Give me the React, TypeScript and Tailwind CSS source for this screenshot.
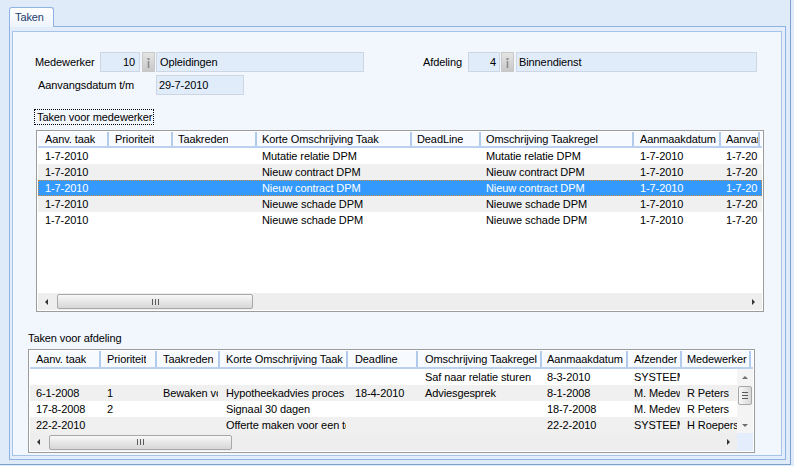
import React from 'react';

type Col = { w: string; pl: string; t: string };

const takenCols: Col[] = [
  { w: 'w-[71px]', pl: 'pl-[7px]', t: 'Aanv. taak' },
  { w: 'w-[64px]', pl: 'pl-[6px]', t: 'Prioriteit' },
  { w: 'w-[84px]', pl: 'pl-[5px]', t: 'Taakreden' },
  { w: 'w-[155px]', pl: 'pl-[5px]', t: 'Korte Omschrijving Taak' },
  { w: 'w-[69px]', pl: 'pl-[5px]', t: 'DeadLine' },
  { w: 'w-[153px]', pl: 'pl-[5px]', t: 'Omschrijving Taakregel' },
  { w: 'w-[87px]', pl: 'pl-[6px]', t: 'Aanmaakdatum' },
  { w: 'w-[39px]', pl: 'pl-[5px]', t: 'Aanvangsdatum' },
];

const takenRows: string[][] = [
  ['1-7-2010', '', '', 'Mutatie relatie DPM', '', 'Mutatie relatie DPM', '1-7-2010', '1-7-2010'],
  ['1-7-2010', '', '', 'Nieuw contract DPM', '', 'Nieuw contract DPM', '1-7-2010', '1-7-2010'],
  ['1-7-2010', '', '', 'Nieuw contract DPM', '', 'Nieuw contract DPM', '1-7-2010', '1-7-2010'],
  ['1-7-2010', '', '', 'Nieuwe schade DPM', '', 'Nieuwe schade DPM', '1-7-2010', '1-7-2010'],
  ['1-7-2010', '', '', 'Nieuwe schade DPM', '', 'Nieuwe schade DPM', '1-7-2010', '1-7-2010'],
];

const afdCols: Col[] = [
  { w: 'w-[71px]', pl: 'pl-[6px]', t: 'Aanv. taak' },
  { w: 'w-[56px]', pl: 'pl-[6px]', t: 'Prioriteit' },
  { w: 'w-[63px]', pl: 'pl-[6px]', t: 'Taakreden' },
  { w: 'w-[128px]', pl: 'pl-[6px]', t: 'Korte Omschrijving Taak' },
  { w: 'w-[70px]', pl: 'pl-[7px]', t: 'Deadline' },
  { w: 'w-[124px]', pl: 'pl-[7px]', t: 'Omschrijving Taakregel' },
  { w: 'w-[86px]', pl: 'pl-[5px]', t: 'Aanmaakdatum' },
  { w: 'w-[54px]', pl: 'pl-[6px]', t: 'Afzender' },
  { w: 'w-[69px]', pl: 'pl-[5px]', t: 'Medewerker' },
];

const afdRows: string[][] = [
  ['', '', '', '', '', 'Saf naar relatie sturen', '8-3-2010', 'SYSTEEM', ''],
  ['6-1-2008', '1', 'Bewaken voorstel', 'Hypotheekadvies proces', '18-4-2010', 'Adviesgesprek', '8-1-2008', 'M. Medewerker', 'R Peters'],
  ['17-8-2008', '2', '', 'Signaal 30 dagen', '', '', '18-7-2008', 'M. Medewerker', 'R Peters'],
  ['22-2-2010', '', '', 'Offerte maken voor een toekomstige klant', '', '', '22-2-2010', 'SYSTEEM', 'H Roepers'],
];

function InfoButton() {
  return (
    <div className="ml-[2px] flex h-[20px] w-[13px] items-center justify-center border border-[#c9c9c9] bg-linear-to-b from-[#e4e4e4] to-[#c8c8c8]">
      <svg width="11" height="18" viewBox="0 0 11 18">
        <rect x="4.5" y="5" width="2" height="2" fill="#8a8a8a" />
        <rect x="4.5" y="8" width="2" height="7" fill="#a5a5a5" />
        <rect x="5" y="8" width="1" height="7" fill="#8e8e8e" />
      </svg>
    </div>
  );
}

function Header({ cols, h }: { cols: Col[]; h: string }) {
  return (
    <div className={`flex ${h} shrink-0 border-b-2 border-[#bcd1ed] bg-[#f7faff]`}>
      {cols.map((c, i) => (
        <div key={i} className={`${c.w} shrink-0 border-r-2 border-[#b3cbea] flex items-center overflow-hidden`}>
          <div className={`${c.pl} overflow-hidden whitespace-nowrap`}>{c.t}</div>
        </div>
      ))}
    </div>
  );
}

function Row({ cols, cells, idx, selected }: { cols: Col[]; cells: string[]; idx: number; selected?: boolean }) {
  const bg = selected
    ? 'bg-[#3399ff] text-white outline outline-dotted outline-[#c98a45] -outline-offset-1'
    : idx % 2 === 1
      ? 'bg-[#f0f0f0]'
      : 'bg-white';
  return (
    <div className={`flex h-[16px] items-center ${bg}`}>
      {cols.map((c, i) => (
        <div key={i} className={`${c.w} shrink-0 overflow-hidden pr-[2px]`}>
          <div className={`${c.pl} overflow-hidden whitespace-nowrap`}>{cells[i]}</div>
        </div>
      ))}
    </div>
  );
}

function Grip() {
  return (
    <div className="flex gap-[2px]">
      <span className="h-[6px] w-px bg-[#5a5a5a]" />
      <span className="h-[6px] w-px bg-[#5a5a5a]" />
      <span className="h-[6px] w-px bg-[#5a5a5a]" />
    </div>
  );
}

function HScroll({ className, thumb }: { className: string; thumb: string }) {
  return (
    <div className={`flex items-center bg-[#eeeeee] ${className}`}>
      <div className="flex h-full w-[17px] items-center justify-center">
        <span className="h-0 w-0 border-y-[3px] border-r-[3px] border-y-transparent border-r-[#333333]" />
      </div>
      <div
        className={`ml-[2px] flex h-[15px] ${thumb} items-center justify-center rounded-[2px] border border-[#a8a8a8] bg-linear-to-b from-[#f8f8f8] to-[#d6d6d6]`}
      >
        <Grip />
      </div>
      <div className="flex-1" />
      <div className="flex h-full w-[17px] items-center justify-center">
        <span className="h-0 w-0 border-y-[3px] border-l-[3px] border-y-transparent border-l-[#333333]" />
      </div>
    </div>
  );
}

function VScroll() {
  return (
    <div className="flex h-[64px] w-[16px] flex-col items-center bg-[#f4f4f4]">
      <div className="flex h-[16px] items-center justify-center">
        <span className="h-0 w-0 border-x-[3px] border-b-[3px] border-x-transparent border-b-[#6e6e6e]" />
      </div>
      <div className="mt-px flex h-[19px] w-[14px] flex-col items-center justify-center gap-[2px] rounded-[2px] border border-[#a8a8a8] bg-linear-to-r from-[#f8f8f8] to-[#d8d8d8]">
        <span className="h-px w-[6px] bg-[#5a5a5a]" />
        <span className="h-px w-[6px] bg-[#5a5a5a]" />
        <span className="h-px w-[6px] bg-[#5a5a5a]" />
      </div>
      <div className="flex-1" />
      <div className="flex h-[16px] items-center justify-center">
        <span className="h-0 w-0 border-x-[3px] border-t-[3px] border-x-transparent border-t-[#6e6e6e]" />
      </div>
    </div>
  );
}

function Field({ w, children, right, pad }: { w: string; children: React.ReactNode; right?: boolean; pad: string }) {
  return (
    <div
      className={`flex h-[20px] ${w} items-center border border-[#cdd6e2] bg-[#e1ecfa] ${pad} ${right ? 'justify-end' : ''}`}
    >
      {children}
    </div>
  );
}

export default function App() {
  return (
    <div className="h-[466px] w-[794px] overflow-hidden bg-[#e0ebfa] font-['Liberation_Sans',Arial,sans-serif] text-[11px] leading-none tracking-[-0.1px] text-black">
      <div className="h-[465px] w-[791px] border-r border-b border-[#7f9fcc]">
        <div className="pt-[7px] pl-[9px]">
          {/* Tab */}
          <div className="relative z-10 -mb-px flex h-[20px] w-[45px] items-center rounded-t-[3px] border border-b-0 border-[#8fb3e3] bg-linear-to-b from-white to-[#eef4fd] pl-[5px] text-[#1d3c6b]">
            Taken
          </div>

          {/* Tab page */}
          <div className="h-[434px] w-[777px] border border-[#8fb3e3] bg-[#e3edfb] pt-[4px] pl-[2px]">
            <div className="h-[425px] w-[770px] border border-[#a5c3eb] bg-[#f2f6fd]">
              {/* Medewerker / Afdeling */}
              <div className="mt-[20px] ml-[22px] flex h-[20px] items-center">
                <span className="w-[65px]">Medewerker</span>
                <Field w="w-[40px]" right pad="pr-[4px]">10</Field>
                <InfoButton />
                <div className="ml-px">
                  <Field w="w-[208px]" pad="pl-[3px]">Opleidingen</Field>
                </div>
                <span className="w-[104px] pr-[6px] text-right">Afdeling</span>
                <Field w="w-[32px]" right pad="pr-[3px]">4</Field>
                <div className="-ml-px">
                  <InfoButton />
                </div>
                <div className="ml-[2px]">
                  <Field w="w-[241px]" pad="pl-[2px]">Binnendienst</Field>
                </div>
              </div>

              <div className="mt-[3px] ml-[25px] flex h-[20px] items-center">
                <span className="w-[118px]">Aanvangsdatum t/m</span>
                <Field w="w-[88px]" pad="pl-[2px]">29-7-2010</Field>
              </div>

              {/* Taken voor medewerker */}
              <div className="mt-[14px] ml-[21px] flex h-[16px] w-fit items-center whitespace-nowrap border border-dotted border-black pr-px pl-[2px]">
                Taken voor medewerker
              </div>

              <div className="mt-[5px] ml-[23px] flex h-[182px] w-[728px] flex-col border border-[#9c9c9c] bg-white p-px">
                <Header cols={takenCols} h="h-[16px]" />
                <div className="h-[145px] overflow-hidden bg-white">
                  {takenRows.map((r, i) => (
                    <Row key={i} cols={takenCols} cells={r} idx={i} selected={i === 2} />
                  ))}
                </div>
                <HScroll className="h-[17px]" thumb="w-[196px]" />
              </div>

              {/* Taken voor afdeling */}
              <div className="mt-[19px] ml-[15px] flex h-[14px] items-center">Taken voor afdeling</div>

              <div className="mt-[4px] ml-[15px] flex h-[104px] w-[727px] flex-col border border-[#9c9c9c] bg-white p-px">
                <Header cols={afdCols} h="h-[18px]" />
                <div className="flex h-[64px]">
                  <div className="w-[707px] overflow-hidden">
                    {afdRows.map((r, i) => (
                      <Row key={i} cols={afdCols} cells={r} idx={i} />
                    ))}
                  </div>
                  <VScroll />
                </div>
                <div className="flex h-[18px]">
                  <HScroll className="h-[18px] w-[707px]" thumb="w-[183px]" />
                  <div className="h-[18px] w-[16px] bg-[#e3edfb]" />
                </div>
              </div>
            </div>
          </div>
        </div>
      </div>
    </div>
  );
}
